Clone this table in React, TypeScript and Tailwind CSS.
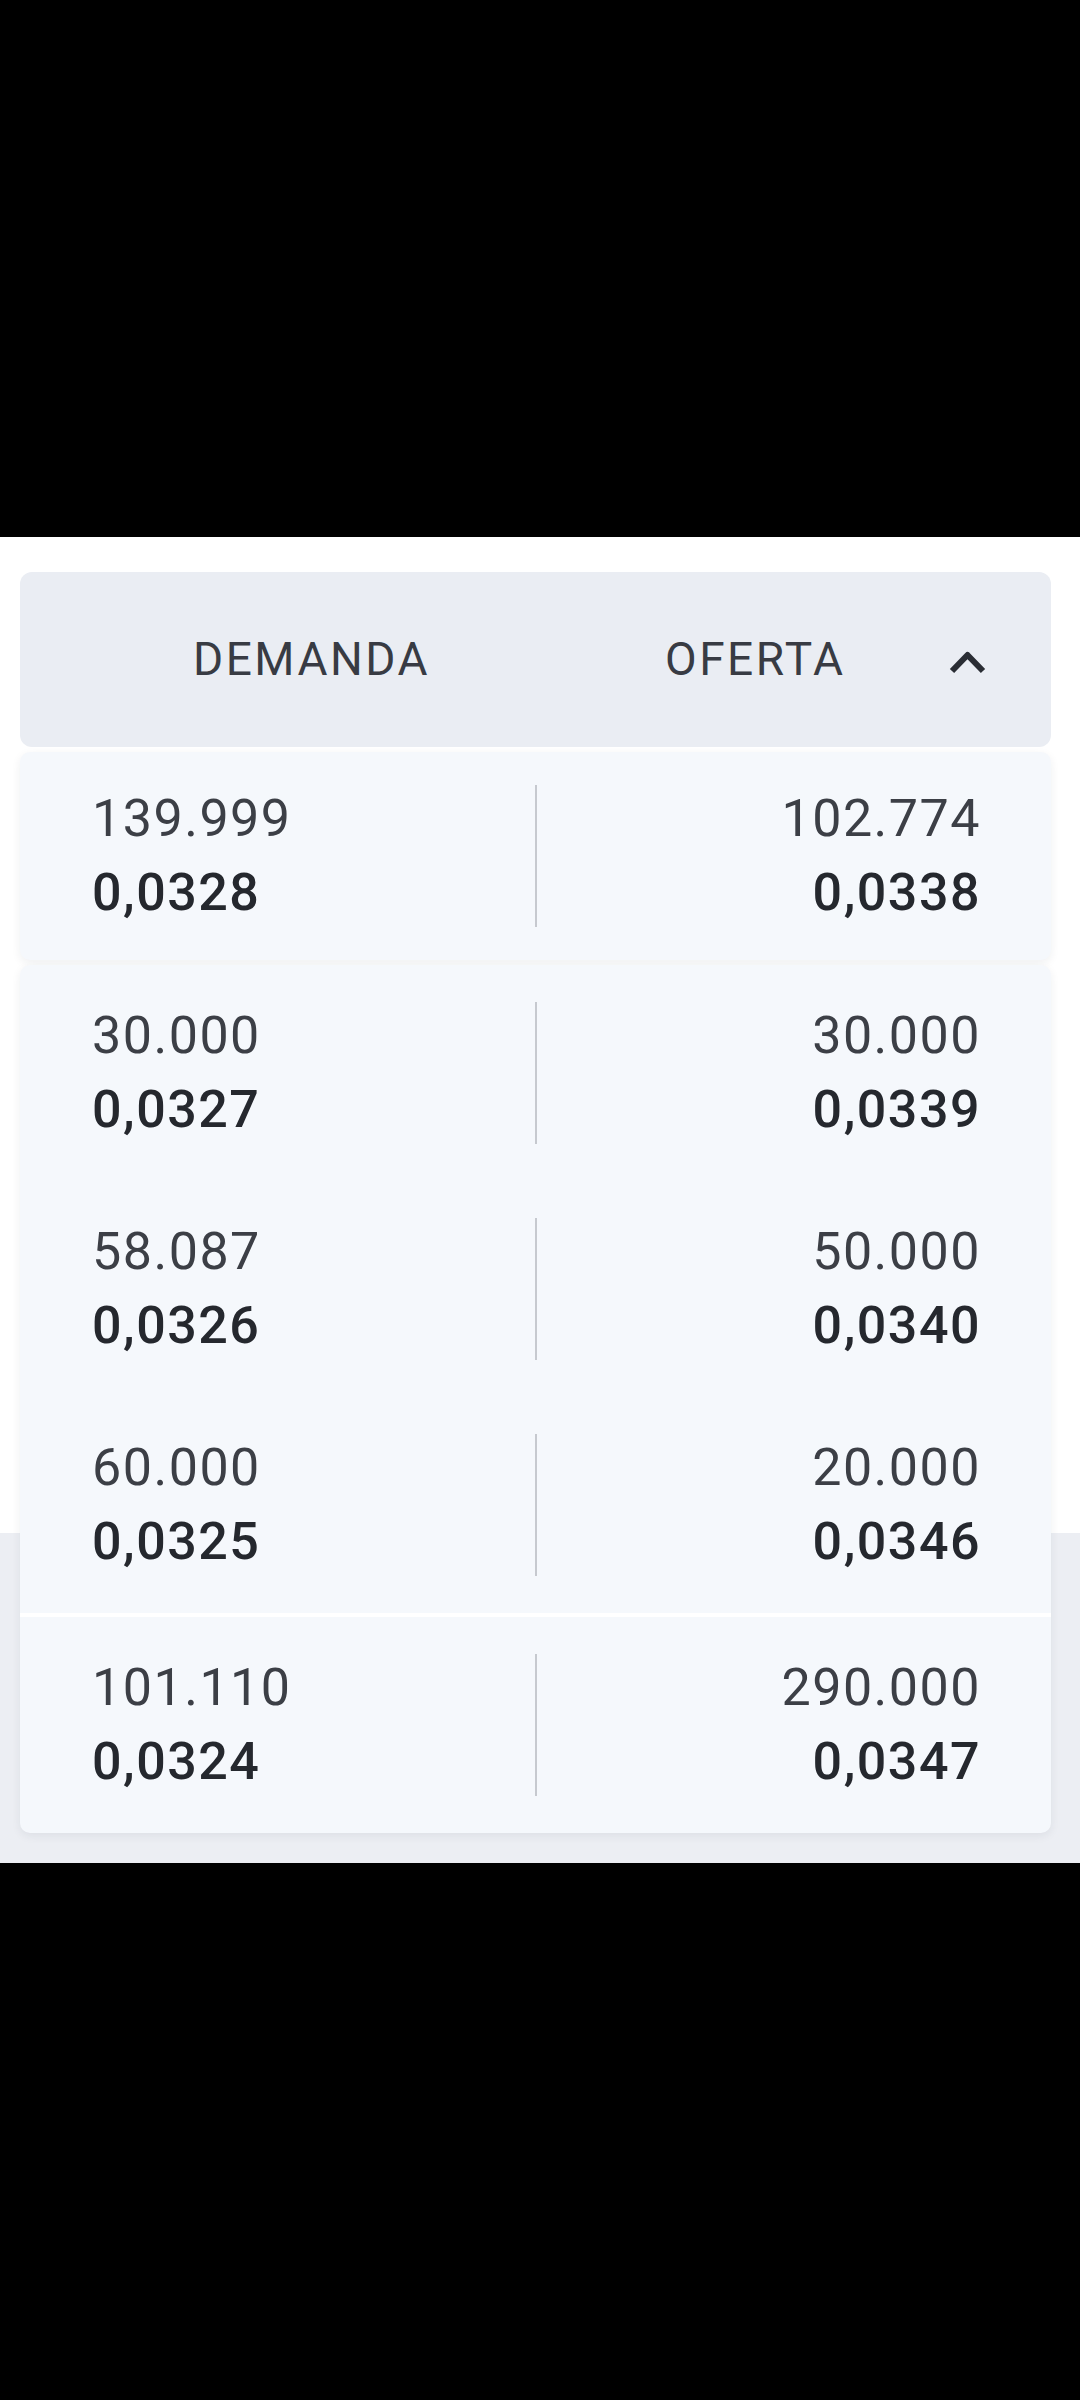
type Quote = {
  qty: string;
  price: string;
};

type Row = {
  bid: Quote;
  ask: Quote;
};

const rows: Row[] = [
  { bid: { qty: "139.999", price: "0,0328" }, ask: { qty: "102.774", price: "0,0338" } },
  { bid: { qty: "30.000", price: "0,0327" }, ask: { qty: "30.000", price: "0,0339" } },
  { bid: { qty: "58.087", price: "0,0326" }, ask: { qty: "50.000", price: "0,0340" } },
  { bid: { qty: "60.000", price: "0,0325" }, ask: { qty: "20.000", price: "0,0346" } },
  { bid: { qty: "101.110", price: "0,0324" }, ask: { qty: "290.000", price: "0,0347" } },
];

function BookRow({ row, tall }: { row: Row; tall?: boolean }) {
  return (
    <div
      className={`grid grid-cols-[1fr_2px_1fr] items-center ${
        tall ? "h-[208px]" : "h-[216px]"
      }`}
    >
      <div className="pl-[72px] tracking-[1.5px]">
        <div className="text-[52px] leading-[74px] text-[#3c3f46]">{row.bid.qty}</div>
        <div className="text-[52px] leading-[74px] font-medium text-[#25282e]">
          {row.bid.price}
        </div>
      </div>
      <div className="h-[142px] w-[2px] bg-[#c6c9cf]" />
      <div className="pr-[70px] text-right tracking-[1.5px]">
        <div className="text-[52px] leading-[74px] text-[#3c3f46]">{row.ask.qty}</div>
        <div className="text-[52px] leading-[74px] font-medium text-[#25282e]">
          {row.ask.price}
        </div>
      </div>
    </div>
  );
}

export default function App() {
  const card = "rounded-[10px] bg-[#f5f8fc] shadow-[0_3px_10px_rgba(30,40,60,0.07)]";

  return (
    <div
      className="min-h-[2400px] w-[1080px] bg-black pt-[537px]"
      style={{ fontFamily: "Roboto, 'Liberation Sans', sans-serif" }}
    >
      {/* panel: blanco arriba, gris abajo */}
      <div className="flex h-[1326px] flex-col gap-[5px] bg-[linear-gradient(to_bottom,#ffffff_996px,#eceef3_996px)] pl-[20px] pr-[29px] pt-[35px]">
        <div className="flex h-[175px] items-center rounded-[12px] bg-[#eaedf3] text-[#383b43]">
          <div className="w-[645px] pl-[173px] text-[46px] tracking-[2.5px]">DEMANDA</div>
          <div className="w-[282px] text-[46px] tracking-[2.5px]">OFERTA</div>
          <svg width="41" height="27" viewBox="0 0 41 27" className="mt-[4px]">
            <path
              d="M5 23 L20.5 7 L36 23"
              fill="none"
              stroke="#2a2d34"
              strokeWidth="6"
              strokeLinejoin="round"
            />
          </svg>
        </div>

        <div className={card}>
          <BookRow row={rows[0]} tall />
        </div>

        <div className={`${card} overflow-hidden`}>
          {rows.slice(1, 4).map((r, i) => (
            <BookRow key={i} row={r} />
          ))}
          <div className="h-[4px] bg-white" />
          <BookRow row={rows[4]} />
        </div>
      </div>
    </div>
  );
}
